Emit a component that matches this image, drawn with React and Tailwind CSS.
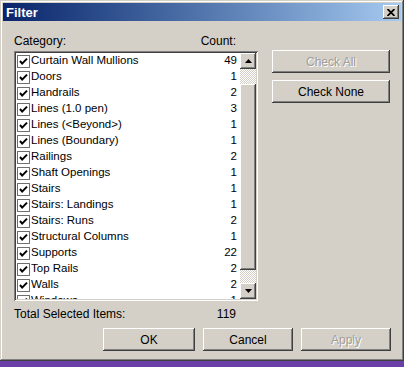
import React from "react"

const items = [
  ["Curtain Wall Mullions", 49],
  ["Doors", 1],
  ["Handrails", 2],
  ["Lines (1.0 pen)", 3],
  ["Lines (<Beyond>)", 1],
  ["Lines (Boundary)", 1],
  ["Railings", 2],
  ["Shaft Openings", 1],
  ["Stairs", 1],
  ["Stairs: Landings", 1],
  ["Stairs: Runs", 2],
  ["Structural Columns", 1],
  ["Supports", 22],
  ["Top Rails", 2],
  ["Walls", 2],
  ["Windows", 1],
]

const raised =
  "shadow-[inset_-1px_-1px_#404040,inset_1px_1px_#ffffff,inset_-2px_-2px_#808080,inset_2px_2px_#d4d0c8]"

// checkbox, drawn like the classic sunken 13px box
const Check = () => (
  <svg width="13" height="13" viewBox="0 0 13 13" className="shrink-0">
    <rect x="0" y="0" width="13" height="13" fill="#6e6e6e" />
    <rect x="1" y="1" width="11" height="11" fill="#ffffff" />
    <path d="M3 6 L5.2 8.6 L10 3.6" stroke="#000" strokeWidth="2" fill="none" />
  </svg>
)

const Btn = ({ children, disabled, className = "" }) => (
  <div
    className={`h-[23px] bg-[#d4d0c8] flex items-center justify-center text-[12px] ${raised} ${
      disabled ? "text-[#a19d96] [text-shadow:1px_1px_#ffffff]" : "text-black"
    } ${className}`}
  >
    {children}
  </div>
)

const ScrollArrow = ({ down }) => (
  <div className={`h-[16px] w-[16px] bg-[#d4d0c8] flex items-center justify-center ${raised}`}>
    <svg width="7" height="4" viewBox="0 0 7 4">
      {down ? <path d="M0 0 H7 L3.5 4 Z" fill="#000" /> : <path d="M0 4 H7 L3.5 0 Z" fill="#000" />}
    </svg>
  </div>
)

const track = "bg-[repeating-conic-gradient(#ffffff_0_25%,#d4d0c8_0_50%)] bg-[length:2px_2px]"

export default function App() {
  return (
    <div className="w-[404px] h-[367px] bg-[#6b3fa8] flex flex-col font-['Liberation_Sans',Arial,sans-serif]">
      <div className="h-[361px] bg-[#d4d0c8] p-[3px] flex flex-col shadow-[inset_-1px_-1px_#404040,inset_1px_1px_#d4d0c8,inset_-2px_-2px_#808080,inset_2px_2px_#ffffff]">
        {/* title bar */}
        <div className="h-[18px] bg-gradient-to-r from-[#0a246a] to-[#a6caf0] flex items-center justify-between pl-[3px] pr-[2px]">
          <span className="text-white font-bold text-[13px] leading-none">Filter</span>
          <div className={`w-[16px] h-[14px] bg-[#d4d0c8] flex items-center justify-center ${raised}`}>
            <svg width="8" height="7" viewBox="0 0 8 7">
              <path d="M0.5 0 L7.5 7 M7.5 0 L0.5 7" stroke="#000" strokeWidth="1.8" />
            </svg>
          </div>
        </div>

        <div className="flex-1 pl-[11px] pr-[9px] pt-[13px] flex flex-col text-[12px] text-black">
          <div className="flex">
            <div className="w-[244px] flex flex-col">
              <div className="flex justify-between pr-[22px] h-[15px] leading-[15px]">
                <span>Category:</span>
                <span>Count:</span>
              </div>
              {/* list box */}
              <div className="mt-[2px] h-[250px] bg-white p-[2px] flex shadow-[inset_1px_1px_#808080,inset_-1px_-1px_#ffffff,inset_2px_2px_#404040,inset_-2px_-2px_#d4d0c8]">
                <div className="flex-1 overflow-hidden text-[11.5px]">
                  {items.map(([name, count]) => (
                    <div key={name} className="h-[16px] flex items-center pl-[1px] pr-[3px]">
                      <Check />
                      <span className="ml-[1px] flex-1 leading-none">{name}</span>
                      <span className="leading-none">{count}</span>
                    </div>
                  ))}
                </div>
                <div className="w-[16px] flex flex-col">
                  <ScrollArrow />
                  <div className={`h-[15px] ${track}`} />
                  <div className={`h-[186px] bg-[#d4d0c8] ${raised}`} />
                  <div className={`flex-1 ${track}`} />
                  <ScrollArrow down />
                </div>
              </div>
            </div>
            <div className="ml-[14px] w-[118px] pt-[16px] flex flex-col gap-[7px]">
              <Btn disabled>Check All</Btn>
              <Btn>Check None</Btn>
            </div>
          </div>

          <div className="w-[244px] flex justify-between pr-[22px] mt-[6px] h-[15px] leading-[15px]">
            <span>Total Selected Items:</span>
            <span>119</span>
          </div>

          <div className="flex justify-end gap-[8px] mt-[6px] pr-[1px]">
            <Btn className="w-[92px]">OK</Btn>
            <Btn className="w-[90px]">Cancel</Btn>
            <Btn disabled className="w-[90px]">Apply</Btn>
          </div>
        </div>
      </div>
    </div>
  )
}
